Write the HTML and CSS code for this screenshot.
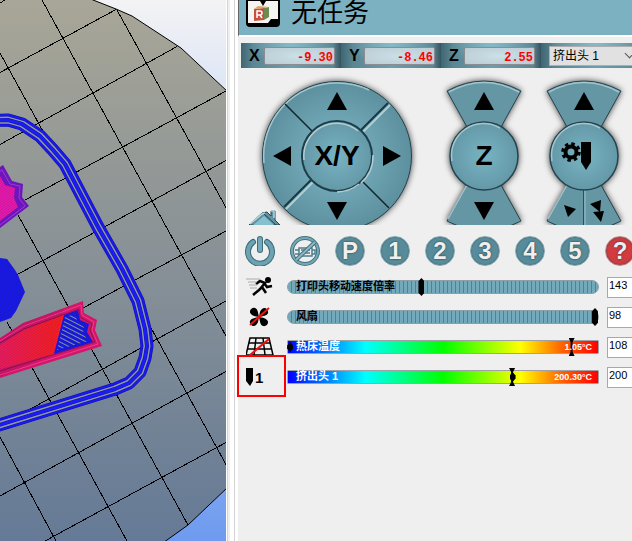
FILE: index.html
```html
<!DOCTYPE html>
<html lang="zh-CN">
<head>
<meta charset="utf-8">
<title>无任务</title>
<link rel="stylesheet" href="styles.css">
</head>
<body>
<main class="app">
  <svg class="scene" viewBox="0 0 226 541" preserveAspectRatio="xMaxYMin slice" aria-hidden="true">
    <defs>
      <linearGradient id="sky" x1="0" y1="0" x2="0" y2="1"><stop offset="0" stop-color="#f3f3f4"/><stop offset=".18" stop-color="#dbe4f6"/><stop offset="1" stop-color="#6e9bef"/></linearGradient>
      <linearGradient id="bed" x1="0" y1="0" x2="0" y2="541" gradientUnits="userSpaceOnUse"><stop offset="0" stop-color="#a8a697"/><stop offset="1" stop-color="#657a96"/></linearGradient>
      <linearGradient id="heat" x1="0" y1="0" x2="1" y2="0"><stop offset="0" stop-color="#ee1c62"/><stop offset="1" stop-color="#fb201e"/></linearGradient>
      <pattern id="hatch" width="4" height="4" patternUnits="userSpaceOnUse" patternTransform="rotate(27)"><path d="M0 1.500h4" stroke="#84919c" stroke-width="1"/></pattern>
      <pattern id="fine" width="2" height="2" patternUnits="userSpaceOnUse" patternTransform="rotate(-35)"><path d="M0 .5h2" stroke="#000" stroke-opacity=".13"/></pattern>
      <path id="skirt" d="M-4 120.500 8 120l14 4 18 12 13 14 12 14 33 63 24 42 16 32 7 28 2 17-2 12-5 14-11 11-14 6L-4 426"/>
    </defs>
    <path fill="url(#sky)" d="M0 0h226v541H0z"/>
    <path fill="url(#bed)" stroke="#000" d="M-2-2h90l28 11 16 7 49 32 47 44v395l-40 38-28 20H-2z"/>
    <g stroke="#000" fill="none" shape-rendering="crispEdges">
      <path d="M0 3 5 0M0 72.500 116 9.500M0 144.500 177 46.500M25 200 226 91M0 284 226 160.500M83 308 226 231M25 412 226 301M0 496 226 371.500M45 541 226 442.500"/>
      <path d="M42 0 226 336M117 10 226 207.500M0 53 226 464.500M18 215 188 525M7 322 127 541M0 437 56 541"/>
    </g>
    <g fill="none" stroke-linejoin="round">
      <use href="#skirt" stroke="#12129c" stroke-width="13"/>
      <use href="#skirt" stroke="#1818f2" stroke-width="12"/>
      <use href="#skirt" stroke="#1212a8" stroke-width="8"/>
      <use href="#skirt" stroke="#8f99a0" stroke-width="7"/>
      <use href="#skirt" stroke="#1212a8" stroke-width="4"/>
      <use href="#skirt" stroke="#1c1cf4" stroke-width="3"/>
    </g>
    <path fill="#7418c8" d="M0 167 3 165l9 16 11 3-1 13 7 9-29 22z"/>
    <path fill="none" stroke="#a63ce6" d="m0 171 2-1 8 14 10 2-1 12 6 8-25 19"/>
    <path fill="#ea1ab0" d="m0 176 5 9 10 3-1 10 4 9-18 14z"/>
    <path fill="url(#fine)" d="M0 167 3 165l9 16 11 3-1 13 7 9-29 22z"/>
    <path fill="#1a1aec" d="m0 258 7 1 8 11 3 5 7 17-9 19-5 7-11 4z"/>
    <path fill="url(#fine)" d="m0 258 7 1 8 11 3 5 7 17-9 19-5 7-11 4z"/>
    <path fill="#d3166b" d="m0 338 23-15 60-22 1 12 13 7-2 10 7 16-102 32z"/>
    <path fill="none" stroke="#f33a8c" d="m0 341 24-15 57-21 1 10 12 7-2 8 6 14-98 31"/>
    <path fill="none" stroke="#8f1356" d="m0 343 24-14 55-20 1 8 12 7-2 6 5 12-95 29"/>
    <path fill="url(#heat)" d="m0 345 24-15 40-15-11 39-53 15z"/>
    <path fill="url(#fine)" d="m0 338 23-15 41-15-11 46-53 23z"/>
    <path fill="#1719d4" d="m64 315 14-5 2 10 9 4-2 8 6 10-39 12z"/>
    <path fill="url(#hatch)" d="m65 317 10-3 3 9 6 4-1 6 5 8-31 9z"/>
  </svg>
  <div class="splitter"></div>

  <section class="panel">
    <header class="status">
      <svg class="logo" width="36" height="28" viewBox="0 0 36 28" aria-hidden="true">
        <rect x="1" y="-8" width="34" height="35" rx="4"/>
        <path fill="#f4f4f2" d="M3 1h12l3 5 3-5h12v18h-7l-3 4H3z"/>
        <path fill="#c94f3d" d="m9 9 10-1v12l-10 1z"/><path fill="#6f8a50" d="m19 8 5-1v10l-5 3z"/><path fill="#d9a768" d="m9 9 4-3 11 1-5 1z"/>
        <path d="M12 18v-7h3q2 0 2 2t-2 2h-3m3 0 2 3" fill="none" stroke="#fff" stroke-width="1.500"/>
      </svg>
      <h1>无任务</h1>
    </header>

    <div class="axes">
      <label class="axis"><span>X</span><input value="-9.30" readonly></label>
      <label class="axis"><span>Y</span><input value="-8.46" readonly></label>
      <label class="axis"><span>Z</span><input value="2.55" readonly></label>
      <div class="axis tool"><select aria-label="挤出头"><option>挤出头 1</option></select></div>
    </div>

    <div class="jog">
      <div class="pad pad-xy">
        <svg class="plate" viewBox="0 0 150 150" aria-hidden="true">
          <defs>
            <radialGradient id="disc"><stop offset="0" stop-color="#7fb8c8"/><stop offset="1" stop-color="#5d909e"/></radialGradient>
            <radialGradient id="hub"><stop offset="0" stop-color="#78b4c3"/><stop offset="1" stop-color="#6498a7"/></radialGradient>
          </defs>
          <circle cx="75" cy="75" r="74.500" fill="url(#disc)" stroke="#24434e"/>
          <path d="M2 82A73 73 0 0 1 75 2a73 73 0 0 1 32 7" fill="none" stroke="#a2c6cf" stroke-width="1.500"/>
          <path d="m23 23 27 27M100 100l27 27" stroke="#10252d" stroke-width="1.500"/>
          <path d="m126 22-27 27M49 99l-27 27" stroke="#193943" stroke-width="2"/><path d="m128 24-27 27M51 101l-27 27" stroke="#b4cdd3" stroke-width="2"/>
          <circle cx="75" cy="75" r="35" fill="url(#hub)" stroke="#1d3e49" stroke-width="2"/>
          <path d="M42 79a33 33 0 0 1 54-29M99 102a36 36 0 0 0 12-28M75 111a36 36 0 0 0 22-8" fill="none" stroke="#b4cdd3" stroke-width="1.500"/>
        </svg>
        <button class="up" aria-label="Y+"><svg width="20" height="18"><path d="M10 0 20 18H0z"/></svg></button>
        <button class="left" aria-label="X-"><svg width="18" height="20"><path d="M0 10 18 0v20z"/></svg></button>
        <span class="hub">X/Y</span>
        <button class="right" aria-label="X+"><svg width="18" height="20"><path d="M18 10 0 0v20z"/></svg></button>
        <button class="down" aria-label="Y-"><svg width="20" height="18"><path d="M10 18 20 0H0z"/></svg></button>
      </div>
      <div class="pad pad-z">
        <svg class="plate" viewBox="0 0 74 150" aria-hidden="true">
          <path id="fan" d="M0 10Q37-10 74 10L54 46H20zM20 104h34l20 36q-37 19-74 0z" fill="#6496a4" stroke="#24434e"/>
          <path id="rim" d="M2 11Q37-8 72 11M1 138l19-34" fill="none" stroke="#a2c6cf" stroke-width="1.500"/>
          <circle cx="37" cy="75" r="34" fill="url(#hub)" stroke="#24434e" stroke-width="1.500"/>
          <path id="shine" d="M5 80a32 32 0 0 1 48-33" fill="none" stroke="#a2c6cf" stroke-width="1.500"/>
        </svg>
        <button class="up" aria-label="Z+"><svg width="20" height="18"><path d="M10 0 20 18H0z"/></svg></button>
        <span class="hub">Z</span>
        <button class="down" aria-label="Z-"><svg width="20" height="18"><path d="M10 18 20 0H0z"/></svg></button>
      </div>
      <div class="pad pad-z">
        <svg class="plate" viewBox="0 0 74 150" aria-hidden="true">
          <use href="#fan"/><use href="#rim"/>
          <path d="M36.500 108v42" stroke="#2c4f5a"/><path d="M38 108v42" stroke="#9cc0ca"/>
          <circle cx="37" cy="75" r="34" fill="url(#hub)" stroke="#24434e" stroke-width="1.500"/><use href="#shine"/>
        </svg>
        <button class="up" aria-label="回抽"><svg width="20" height="18"><path d="M10 0 20 18H0z"/></svg></button>
        <span class="hub"><svg width="46" height="28" viewBox="0 0 46 28"><circle cx="10" cy="10" r="5.500" fill="none" stroke="#000" stroke-width="4"/><circle cx="10" cy="10" r="8.300" fill="none" stroke="#000" stroke-width="3" stroke-dasharray="3.500 3.020"/><path d="M20 0h10v20l-5 8-5-8z"/></svg></span>
        <div class="down split">
          <button aria-label="慢速挤出"><svg width="12" height="12"><path d="m0 0 12 4-8 8z"/></svg></button>
          <button aria-label="快速挤出"><svg width="14" height="22"><path d="m0 4 11-4-1 12zM3 12l11-1-3 11z"/></svg></button>
        </div>
      </div>
      <button class="home" aria-label="归位"><svg width="32" height="16" viewBox="0 0 32 16"><path d="M1 16 14 4l5-1 4 4V2h4v9l5 5z" fill="#5d93a2" stroke="#24434e"/><path d="m5 16 11-9 10 9z" fill="#86c0cf"/><path d="M2 15 14 5l3-1M23 2h3v7" fill="none" stroke="#b9d4da" stroke-width="1.500"/><path d="m16 5 12 11" stroke="#24434e"/></svg></button>
    </div>

    <nav class="actions">
      <button class="plain" aria-label="电源"><svg width="30" height="30" viewBox="0 0 30 30" fill="none" stroke-linecap="round"><path d="M8 6A12 12 0 1 0 22 6" stroke="#3f6b78" stroke-width="6"/><path d="M8 6A12 12 0 1 0 22 6" stroke="#6ba3b2" stroke-width="4"/><path d="M15 3v11" stroke="#3f6b78" stroke-width="6"/><path d="M15 3v11" stroke="#6fabb9" stroke-width="4"/></svg></button>
      <button class="plain" aria-label="关闭电机"><svg width="30" height="30" viewBox="0 0 30 30" fill="none"><circle cx="15" cy="15" r="13" stroke="#44717e" stroke-width="4"/><circle cx="15" cy="15" r="13" stroke="#76a9b7" stroke-width="2"/><path d="M9 12h13v8H9zM5 14h4m-4 4h4m13-4h3v4h-3M11 14h9m-9 3h9" stroke="#4d7f8e" stroke-width="1.500"/><path d="M6 24 25 6" stroke="#44717e" stroke-width="4"/><path d="M6 24 25 6" stroke="#8cb8c4" stroke-width="2"/></svg></button>
      <button>P</button><button>1</button><button>2</button><button>3</button><button>4</button><button>5</button>
      <button class="help">?</button>
    </nav>

    <div class="controls">
      <div class="row">
        <svg class="glyph" width="28" height="20" viewBox="0 0 28 20" aria-hidden="true"><circle cx="22" cy="3" r="3"/><path d="M7 18l6-5 3-3 4 6M10 7l4-3 5 2-5 6M18 6l3 4 5-1" fill="none" stroke="#000" stroke-width="2.500"/><path d="M0 2h14M2 5h9M3 8h8M4 11h7" stroke="#aaa"/></svg>
        <div class="slider"><input id="speed" type="range" min="25" max="300" value="143"><label for="speed">打印头移动速度倍率</label></div>
        <input class="amount" aria-label="速度倍率" value="143">
      </div>
      <div class="row">
        <button class="glyph" aria-label="风扇开关"><svg width="28" height="20" viewBox="0 0 28 20"><g transform="translate(13 10)"><path id="blade" d="M0 0C-1-4-1-8-4-9S-11-6-8-3-3-1 0 0z"/><use href="#blade" transform="rotate(90)"/><use href="#blade" transform="rotate(180)"/><use href="#blade" transform="rotate(270)"/></g><path d="M4 18 23 1" stroke="#f01010" stroke-width="2"/></svg></button>
        <div class="slider"><input id="fan-speed" type="range" min="0" max="98" value="98"><label for="fan-speed">风扇</label></div>
        <input class="amount" aria-label="风扇速度" value="98">
      </div>
      <div class="row">
        <button class="glyph" aria-label="热床开关"><svg width="28" height="20" viewBox="0 0 28 20"><path d="M4 1h19l4 17H0zM2 12h23M3 6h21M10 1 8 18M17 1l2 17" fill="none" stroke="#000" stroke-width="1.500"/><path d="M4 18 23 2" stroke="#f01010" stroke-width="2"/></svg></button>
        <div class="slider heat"><input id="bed-temp" type="range" min="0" max="117" value="108"><label for="bed-temp">热床温度</label><output>1.05°C</output><i class="actual" style="left:1%"></i></div>
        <input class="amount" aria-label="热床目标温度" value="108">
      </div>
      <div class="row">
        <button class="glyph nozzle" aria-label="挤出头 1 加热"><svg width="8" height="18"><path d="M0 0h7v13l-3 5-4-5z"/></svg>1</button>
        <div class="slider heat"><input id="head-temp" type="range" min="0" max="275" value="200"><label for="head-temp">挤出头 1</label><output>200.30°C</output><i class="actual" style="left:72.3%"></i></div>
        <input class="amount" aria-label="挤出头目标温度" value="200">
        <span class="callout"></span>
      </div>
    </div>
  </section>
</main>
</body>
</html>
```
FILE: styles.css
```css
* { box-sizing: border-box; }
body {
  margin: 0;
  overflow: hidden;
  background: #efefef;
  color: #000;
  font-family: "Liberation Sans", "Noto Sans CJK SC", sans-serif;
}
button, input, select { font: inherit; color: inherit; margin: 0; }
button { padding: 0; border: 0; background: none; display: grid; place-items: center; }

.app {
  display: grid;
  grid-template-columns: minmax(0, 1fr) 12px 394px;
  min-height: 100vh;
}
.scene { width: 100%; height: 100vh; }
.splitter {
  background: linear-gradient(90deg, #fff 1px, #d4d4d4 1px 2px, #efefef 2px 4px, #fff 4px 8px, #d4d4d4 8px 9px, #fff 9px 12px);
}

.status {
  display: flex;
  align-items: flex-start;
  gap: 10px;
  height: 37px;
  padding-left: 6px;
  background: #7bb1c0;
  border-left: 1px solid #666;
  border-bottom: 2px solid #fff;
}
.status h1 { margin: 0; font-size: 26px; font-weight: 400; line-height: 26px; }

.axes { display: flex; margin: 6px 0 0 3px; }
.axis {
  display: flex;
  flex: none;
  align-items: center;
  width: 100px;
  height: 25px;
  padding-left: 8px;
  background: radial-gradient(ellipse at 50% 0, #8cc2cfcc, transparent 60%), linear-gradient(90deg, #3f6672, #5b8693 12%, #6c9eac 50%, #5b8693 92%, #34535e);
}
.axis span { width: 15px; font-size: 16px; font-weight: 700; }
.axis input {
  width: 71px;
  height: 18px;
  padding: 4px 1px 0;
  border: 1px solid #8a8e92;
  border-radius: 2px;
  background: radial-gradient(#cae0e7, #bccbd3);
  color: #f00;
  font: 700 12px/14px "Liberation Mono", monospace;
  text-align: right;
}
.axis.tool { position: relative; width: 110px; }
.axis select {
  appearance: none;
  width: 92px;
  height: 20px;
  padding: 0 3px;
  border: 1px solid #adadad;
  border-radius: 0;
  background: #e1e1e1;
  font-size: 12px;
}
.axis.tool::after {
  content: "";
  position: absolute;
  top: 7px;
  left: 85px;
  width: 6px;
  height: 6px;
  border: solid #555;
  border-width: 0 1px 1px 0;
  transform: rotate(45deg);
  pointer-events: none;
}

.jog {
  position: relative;
  display: flex;
  height: 157px;
  padding: 13px 0 0 24px;
  overflow: hidden;
}
.pad { display: grid; flex: none; grid-template-rows: 40px 70px 40px; height: 150px; }
.pad-xy { grid-template-columns: 40px 70px 40px; margin-right: 35px; }
.pad-z { grid-template-columns: 74px; margin-right: 26px; }
.plate {
  grid-area: 1 / 1 / -1 / -1;
  width: 100%;
  height: 150px;
  overflow: visible;
  filter: drop-shadow(0 0 3px #000b);
}
.pad button, .hub, .split { z-index: 1; }
.hub { display: grid; place-items: center; grid-row: 2; font-size: 28px; font-weight: 700; }
.up { grid-row: 1; }
.down { grid-row: 3; }
.pad-xy .up, .pad-xy .hub, .pad-xy .down { grid-column: 2; }
.pad-z .up, .pad-z .hub, .pad-z .down { grid-column: 1; }
.left { grid-area: 2 / 1; }
.right { grid-area: 2 / 3; }
.split { display: flex; justify-content: center; gap: 14px; }
.home { position: absolute; left: 10px; bottom: 0; }

.actions { display: flex; gap: 15px; padding: 11px 0 6px 7px; }
.actions button {
  flex: none;
  width: 30px;
  height: 30px;
  border: 1px solid #82a4ad;
  border-radius: 50%;
  background: radial-gradient(#588b99 50%, #6497a5);
  box-shadow: inset 0 0 2px #264b56;
  color: #efefef;
  font-size: 24px;
  font-weight: 700;
  line-height: 28px;
  text-shadow: 0 0 2px #123039;
}
.actions .plain { border: 0; background: none; box-shadow: none; }
.actions .help { background: radial-gradient(#d33b3e 50%, #bb4044); border-color: #c58587; }

.row { position: relative; display: flex; align-items: center; height: 30px; padding-left: 8px; }
.glyph { flex: none; width: 28px; margin-right: 13px; }
.nozzle { display: flex; align-items: center; gap: 1px; font-size: 15px; font-weight: 700; }
.slider {
  position: relative;
  display: grid;
  grid-template-columns: 1fr auto;
  align-items: center;
  flex: none;
  width: 312px;
  height: 20px;
  margin-right: 8px;
}
.slider input {
  grid-area: 1 / 1 / 2 / 3;
  appearance: none;
  width: 100%;
  height: 14px;
  border: 1px solid #8b9fa5;
  border-radius: 7px;
  background: repeating-linear-gradient(90deg, #72aabb 0 3px, #508390 3px 4px);
}
.slider input::-webkit-slider-thumb {
  appearance: none;
  width: 6px;
  height: 18px;
  background: #000;
  clip-path: polygon(50% 0, 100% 18%, 100% 82%, 50% 100%, 0 82%, 0 18%);
}
.slider label, .slider output { z-index: 1; grid-row: 1; pointer-events: none; font-weight: 700; line-height: 14px; }
.slider label { grid-column: 1; padding: 0 0 2px 9px; font-size: 11px; }
.slider output { grid-column: 2; padding-right: 7px; font-size: 9px; }
.heat { color: #fff; }
.heat input {
  border-color: #a0a0a8;
  border-radius: 1px;
  background: linear-gradient(90deg, #00f, #0ff 25%, #0f0 50%, #ff0 75%, #f60 88%, #f00);
}
.heat input::-webkit-slider-thumb { clip-path: polygon(0 0, 100% 0, 66% 22%, 66% 78%, 100% 100%, 0 100%, 33% 78%, 33% 22%); }
.actual {
  position: absolute;
  top: 5px;
  width: 6px;
  height: 10px;
  margin-left: -3px;
  background: #000;
  clip-path: polygon(50% 0, 100% 35%, 100% 65%, 50% 100%, 0 65%, 0 35%);
}
.amount {
  flex: none;
  width: 44px;
  height: 21px;
  padding: 0 1px 4px;
  border: 1px solid #a5a8b0;
  background: #fff;
  font-size: 11px;
}
.callout {
  position: absolute;
  top: -7px;
  left: -1px;
  width: 49px;
  height: 42px;
  border: 2px solid #f00;
  pointer-events: none;
}
```
